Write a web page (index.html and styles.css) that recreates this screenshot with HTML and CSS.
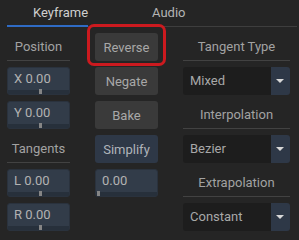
FILE: index.html
```html
<!DOCTYPE html>
<html lang="en">
<head>
  <meta charset="UTF-8">
  <title>Keyframe</title>
  <link rel="stylesheet" href="styles.css">
</head>
<body>
  <div class="tabs">
    <div class="tab active">Keyframe</div>
    <div class="tab">Audio</div>
  </div>

  <div class="panel">
    <div class="label">Position</div>
    <div class="btn-wrap">
      <button class="btn">Reverse</button>
      <span class="mark"></span>
    </div>
    <div class="label">Tangent Type</div>

    <div class="field">X 0.00<span class="bar"><i style="left: 31px"></i></span></div>
    <button class="btn">Negate</button>
    <div class="combo"><span>Mixed</span><b></b></div>

    <div class="field">Y 0.00<span class="bar"><i style="left: 31px"></i></span></div>
    <button class="btn">Bake</button>
    <div class="label">Interpolation</div>

    <div class="label">Tangents</div>
    <button class="btn blue">Simplify</button>
    <div class="combo"><span>Bezier</span><b></b></div>

    <div class="field">L 0.00<span class="bar"><i style="left: 31px"></i></span></div>
    <div class="field">0.00<span class="bar"><i style="left: 1px"></i></span></div>
    <div class="label">Extrapolation</div>

    <div class="field">R 0.00<span class="bar"><i style="left: 31px"></i></span></div>
    <div></div>
    <div class="combo"><span>Constant</span><b></b></div>
  </div>
</body>
</html>
```

FILE: styles.css
```css
body {
  margin: 0;
  width: 299px;
  height: 240px;
  background: #252525;
  font-family: Roboto, "Liberation Sans", sans-serif;
  font-size: 13px;
  color: #a6a6a6;
  overflow: hidden;
}
.tabs {
  display: flex;
  margin-left: 7px;
  margin-right: 2px;
  height: 26px;
  border-bottom: 1px solid #3e3e3e;
}
.tab {
  line-height: 25px;
  color: #b4b4b4;
  padding-left: 64px;
}
.tab.active {
  width: 49px;
  padding-left: 26px;
  padding-right: 6px;
  color: #cfcfcf;
  border-bottom: 2px solid #2f6bc4;
  margin-bottom: -1px;
}
.panel {
  display: grid;
  grid-template-columns: 63px 63px 107px;
  grid-auto-rows: 28px;
  column-gap: 25px;
  row-gap: 6px;
  padding: 6px 0 0 7px;
}
.label {
  box-sizing: border-box;
  border-bottom: 1px solid #424242;
  text-align: center;
  line-height: 28px;
  color: #a2a2a2;
}
.btn {
  font: inherit;
  color: #a8a8a8;
  background: #3a3a3a;
  border: none;
  border-radius: 3px;
  padding: 0;
  width: 63px;
  height: 28px;
}
.btn.blue {
  background: #2e3847;
  color: #b0b4ba;
}
.btn-wrap {
  position: relative;
}
.mark {
  position: absolute;
  left: -8px;
  top: -9px;
  width: 73px;
  height: 36px;
  border: 3px solid #cc1a1f;
  border-radius: 7px;
}
.field {
  position: relative;
  box-sizing: border-box;
  background: #323c49;
  border: 1px solid #2a323d;
  border-radius: 3px;
  padding-left: 6px;
  line-height: 22px;
  color: #b2b2b2;
}
.bar {
  position: absolute;
  left: 0;
  right: 0;
  bottom: 0;
  height: 4px;
  background: #27303b;
}
.bar i {
  position: absolute;
  top: -1px;
  width: 3px;
  height: 5px;
  background: #858585;
}
.combo {
  display: flex;
  border-radius: 3px;
  overflow: hidden;
}
.combo span {
  flex: 1;
  background: #1d1d1d;
  padding-left: 7px;
  line-height: 28px;
  color: #a8a8a8;
}
.combo b {
  width: 19px;
  background: #2e3847;
  position: relative;
}
.combo b::after {
  content: "";
  position: absolute;
  left: 5px;
  top: 12px;
  border-left: 4px solid transparent;
  border-right: 4px solid transparent;
  border-top: 4px solid #d8d8d8;
}
```
